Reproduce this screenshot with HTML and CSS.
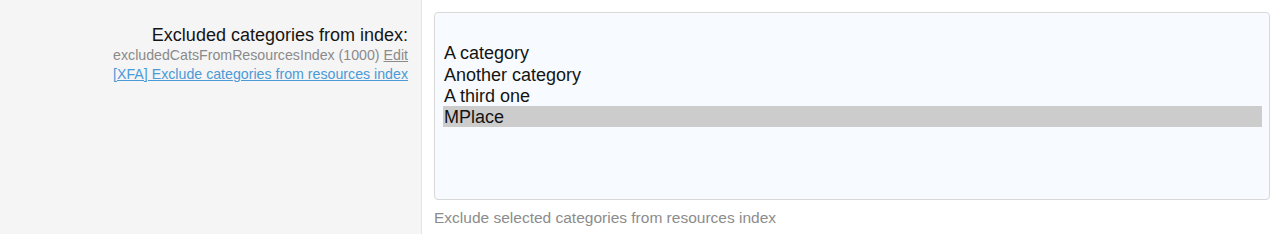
FILE: index.html
```html
<!DOCTYPE html>
<html>
<head>
<meta charset="utf-8">
<link rel="stylesheet" href="styles.css">
</head>
<body>
<div class="row">
  <dl class="term">
    <dt class="label">Excluded categories from index:</dt>
    <dd class="meta">excludedCatsFromResourcesIndex (1000) <a class="edit" href="#">Edit</a></dd>
    <dd class="meta"><a class="xfa" href="#">[XFA] Exclude categories from resources index</a></dd>
  </dl>
  <div class="input">
    <div class="select">
      <div class="option"></div>
      <div class="option">A category</div>
      <div class="option">Another category</div>
      <div class="option">A third one</div>
      <div class="option selected">MPlace</div>
    </div>
    <div class="hint">Exclude selected categories from resources index</div>
  </div>
</div>
</body>
</html>
```
FILE: styles.css
```css
html, body {
  margin: 0;
  padding: 0;
  background: #fff;
  font-family: "Liberation Sans", Arial, sans-serif;
}
.row {
  display: flex;
  height: 234px;
}
.term {
  width: 422px;
  flex: none;
  margin: 0;
  padding: 24px 13px 0 0;
  box-sizing: border-box;
  background: #f5f5f5;
  border-right: 1px solid #e4e4e4;
  text-align: right;
}
.label {
  font-size: 18px;
  line-height: 22px;
  color: #141414;
}
.meta {
  margin: 0;
  font-size: 14.2px;
  line-height: 19px;
  color: #8a8a8a;
}
.edit {
  color: #8a8a8a;
  text-decoration: underline;
}
.xfa {
  color: #4b9ad8;
  text-decoration: underline;
}
.input {
  flex: 1;
  padding: 12px 10px 0 12px;
}
.select {
  height: 188px;
  box-sizing: border-box;
  border: 1px solid #d8d8d8;
  border-radius: 4px;
  background: #f7fbff;
  padding: 8px 7px 0 8px;
  font-size: 18px;
  color: #141414;
}
.option {
  height: 21.3px;
  line-height: 23px;
  padding-left: 1px;
}
.selected {
  background: #cccccc;
}
.hint {
  margin-top: 9px;
  font-size: 15.5px;
  line-height: 18px;
  color: #8c8c8c;
}
```
